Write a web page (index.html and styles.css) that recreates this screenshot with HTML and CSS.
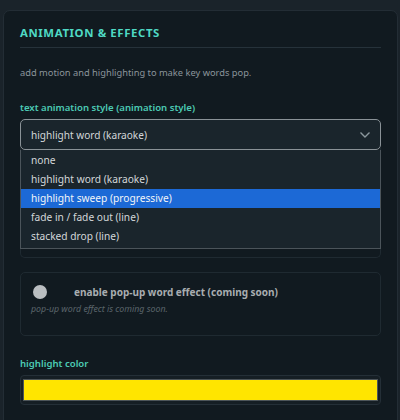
FILE: index.html
```html
<!DOCTYPE html>
<html>
<head>
<meta charset="utf-8">
<link rel="stylesheet" href="styles.css">
</head>
<body>
<div class="card">
  <h2 class="title">ANIMATION &amp; EFFECTS</h2>
  <p class="desc">add motion and highlighting to make key words pop.</p>
  <div class="field style-field">
    <label class="label">text animation style (animation style)</label>
    <div class="select-wrap">
      <div class="select">
        <span>highlight word (karaoke)</span>
        <svg class="chev" width="12" height="8" viewBox="0 0 12 8"><path d="M1.5 1.5 L6 6 L10.5 1.5" fill="none" stroke="#8b979d" stroke-width="1.4"/></svg>
      </div>
      <ul class="menu">
        <li>none</li>
        <li>highlight word (karaoke)</li>
        <li class="sel">highlight sweep (progressive)</li>
        <li>fade in / fade out (line)</li>
        <li>stacked drop (line)</li>
      </ul>
    </div>
    <div class="hidden-box"></div>
  </div>
  <div class="popup">
    <div class="toggle-row">
      <span class="knob"></span>
      <span class="toggle-text">enable pop-up word effect (coming soon)</span>
    </div>
    <p class="note">pop-up word effect is coming soon.</p>
  </div>
  <div class="field color-field">
    <label class="label">highlight color</label>
    <div class="color-input"><div class="swatch"></div></div>
  </div>
</div>
</body>
</html>
```
FILE: styles.css
```css
* { box-sizing: border-box; }
html, body { margin: 0; padding: 0; }
body {
  background: #1a232a;
  font-family: "Noto Sans", "Open Sans", sans-serif;
  width: 400px;
  height: 420px;
  overflow: hidden;
}
.card {
  margin: 10px 2px 0 3px;
  padding: 14px 16px 20px;
  background: #111a20;
  border: 1px solid #232d35;
  border-radius: 7px;
  height: 430px;
}
.title {
  margin: 0;
  font-size: 11.4px;
  line-height: 16px;
  font-weight: 700;
  letter-spacing: 0.6px;
  color: #4fd9c4;
  padding-bottom: 6px;
  border-bottom: 1px solid #26323a;
}
.desc {
  margin: 18px 0 0;
  font-size: 9.3px;
  line-height: 14px;
  color: #8b959b;
}
.field { display: flex; flex-direction: column; }
.label {
  font-size: 9.6px;
  line-height: 14px;
  font-weight: 600;
  color: #4ccab4;
}
.style-field { margin-top: 21px; }
.select-wrap { position: relative; margin-top: 4px; }
.select {
  height: 31px;
  border: 1px solid #8a9297;
  border-radius: 5px;
  background: #1a252c;
  display: flex;
  align-items: center;
  justify-content: space-between;
  padding: 0 9px 0 10px;
  font-size: 10.1px;
  color: #d3d7d9;
}
.chev { display: block; }
.menu {
  position: absolute;
  left: 0;
  right: 0;
  top: 31px;
  margin: 0;
  padding: 1px 0 2px;
  list-style: none;
  background: #1a252c;
  border: 1px solid #4b545a;
  border-top: none;
  z-index: 2;
}
.menu li {
  height: 19px;
  line-height: 19px;
  padding-left: 10px;
  font-size: 10.2px;
  color: #d3d7d9;
}
.menu li.sel { background: #1c69d6; color: #f2f5f8; }
.hidden-box {
  height: 110px;
  margin-top: -2px;
  border: 1px solid #1f2a31;
  border-top: none;
  border-radius: 0 0 5px 5px;
}
.popup {
  margin-top: 14px;
  height: 64px;
  border: 1px solid #1f2a31;
  border-radius: 5px;
  padding: 12px 10px 0 10px;
}
.toggle-row { display: flex; align-items: center; }
.knob {
  width: 14px;
  height: 14px;
  border-radius: 50%;
  background: #babec1;
  margin-left: 2px;
  flex: none;
}
.toggle-text {
  margin-left: 27px;
  font-size: 10px;
  font-weight: 700;
  color: #a8adb0;
}
.note {
  margin: 4px 0 0;
  font-size: 8.8px;
  font-style: italic;
  color: #5b656b;
}
.color-field { margin-top: 21px; }
.label.color-label { font-size: 9.8px; }
.color-input {
  margin-top: 4px;
  height: 30px;
  border: 1px solid #242f37;
  border-radius: 4px;
  background: #151e24;
  padding: 3px 2px;
}
.swatch {
  height: 22px;
  background: #ffe500;
  border: 1px solid #4d555a;
}
```
